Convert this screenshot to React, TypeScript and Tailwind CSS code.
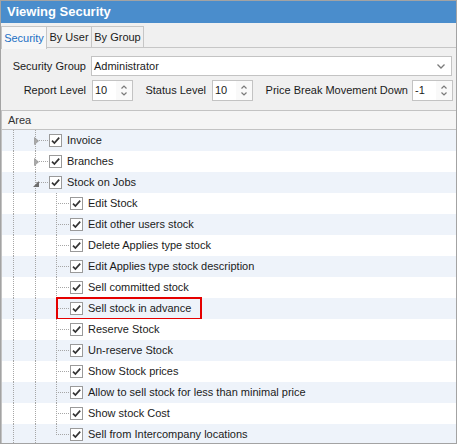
import React from 'react';

type Row = { label: string; level: 1 | 2; exp?: 'collapsed' | 'expanded'; last?: boolean; marked?: boolean };

const rows: Row[] = [
  { label: 'Invoice', level: 1, exp: 'collapsed' },
  { label: 'Branches', level: 1, exp: 'collapsed' },
  { label: 'Stock on Jobs', level: 1, exp: 'expanded' },
  { label: 'Edit Stock', level: 2 },
  { label: 'Edit other users stock', level: 2 },
  { label: 'Delete Applies type stock', level: 2 },
  { label: 'Edit Applies type stock description', level: 2 },
  { label: 'Sell committed stock', level: 2 },
  { label: 'Sell stock in advance', level: 2, marked: true },
  { label: 'Reserve Stock', level: 2 },
  { label: 'Un-reserve Stock', level: 2 },
  { label: 'Show Stock prices', level: 2 },
  { label: 'Allow to sell stock for less than minimal price', level: 2 },
  { label: 'Show stock Cost', level: 2 },
  { label: 'Sell from Intercompany locations', level: 2, last: true },
];

const Check = () => (
  <div className="flex h-[13px] w-[13px] shrink-0 items-center justify-center border border-[#9a9a9a] bg-white">
    <svg width="11" height="11" viewBox="0 0 11 11">
      <path d="M2 5.6 L4.4 8 L9.2 2.6" fill="none" stroke="#333" strokeWidth="1.7" />
    </svg>
  </div>
);

const Spin = ({ value }: { value: string }) => (
  <div className="flex h-[21px] w-[41px] shrink-0 items-center border border-[#c3c3c3] bg-white">
    <span className="flex-1 pl-[2px] text-[11px] text-[#1b1b1b]">{value}</span>
    <div className="flex h-full w-[16px] flex-col items-center justify-center gap-[3px] bg-[#f9f9f9]">
      <svg width="6" height="4" viewBox="0 0 6 4">
        <path d="M0.5 3.5 L3 1 L5.5 3.5" fill="none" stroke="#7a7a7a" strokeWidth="1.2" />
      </svg>
      <svg width="6" height="4" viewBox="0 0 6 4">
        <path d="M0.5 0.5 L3 3 L5.5 0.5" fill="none" stroke="#7a7a7a" strokeWidth="1.2" />
      </svg>
    </div>
  </div>
);

const dot = 'border-dotted border-[#a6a6a6]';

function TreeRow({ row, index }: { row: Row; index: number }) {
  const bg = index % 2 === 0 ? 'bg-[#eef3fa]' : 'bg-white';
  return (
    <div className={`relative flex h-[21px] shrink-0 items-stretch ${bg}`}>
      <div className="w-[11px] shrink-0" />
      <div className={`w-[22px] shrink-0 border-l ${dot}`} />
      {row.level === 1 ? (
        <div className={`relative w-[14px] shrink-0 border-l ${dot}`}>
          <div className={`absolute left-0 right-[1px] top-[10px] border-t ${dot}`} />
          {row.exp === 'collapsed' ? (
            <svg className="absolute left-[-2px] top-[7px]" width="5" height="8" viewBox="0 0 5 8">
              <path d="M0.5 0.5 L4.5 4 L0.5 7.5 Z" fill="#a8a8a8" stroke="#8c8c8c" strokeWidth="0.6" />
            </svg>
          ) : (
            <svg className="absolute left-[-3px] top-[9px]" width="6" height="6" viewBox="0 0 6 6">
              <path d="M6 0 L6 6 L0 6 Z" fill="#6e6e6e" />
            </svg>
          )}
        </div>
      ) : (
        <>
          <div className={`w-[21px] shrink-0 border-l ${dot}`} />
          <div className="relative w-[14px] shrink-0">
            <div className={`absolute left-0 top-0 border-l ${dot} ${row.last ? 'h-[11px]' : 'bottom-0'}`} />
            <div className={`absolute left-0 right-[1px] top-[10px] border-t ${dot}`} />
          </div>
        </>
      )}
      <div className="flex items-center">
        <Check />
      </div>
      <span className="ml-[5px] flex items-center whitespace-nowrap text-[11px] text-[#1b1b1b]">{row.label}</span>
      {row.marked && (
        <div className="pointer-events-none absolute left-[54px] top-[-1px] h-[23px] w-[146px] border-2 border-[#e50000]" />
      )}
    </div>
  );
}

export default function App() {
  return (
    <div className="flex h-[444px] w-[457px] flex-col overflow-hidden border border-[#a3a3a3] bg-[#f0f0f0] font-['Liberation_Sans',Arial,sans-serif]">
      {/* title */}
      <div className="flex h-[22px] shrink-0 items-center bg-[#4a8dcc] pl-[6px] text-[13px] font-bold text-white">
        Viewing Security
      </div>
      {/* tabs */}
      <div className="flex h-[25px] shrink-0 items-end">
        <div className="relative z-10 -mb-px flex h-[23px] w-[46px] items-center justify-center border border-b-0 border-[#c6c6c6] bg-[#f7f7f7] text-[11px] text-[#1c6fc4]">
          Security
        </div>
        <div className="flex h-[22px] w-[45px] items-center justify-center border-y border-r border-[#c6c6c6] text-[11px] text-[#1b1b1b]">
          By User
        </div>
        <div className="flex h-[22px] w-[52px] items-center justify-center border-y border-r border-[#c6c6c6] text-[11px] text-[#1b1b1b]">
          By Group
        </div>
        <div className="flex-1 self-stretch border-b border-[#c6c6c6]" />
      </div>
      {/* form */}
      <div className="flex shrink-0 flex-col pt-[8px]">
        <div className="flex h-[20px] items-center">
          <div className="w-[85px] shrink-0 text-right text-[11px] text-[#1b1b1b]">Security Group</div>
          <div className="ml-[5px] mr-[4px] flex h-[20px] flex-1 items-center border border-[#c3c3c3] bg-white pl-[2px]">
            <span className="flex-1 text-[11px] text-[#1b1b1b]">Administrator</span>
            <svg className="mr-[6px]" width="8" height="5" viewBox="0 0 8 5">
              <path d="M0.5 0.5 L4 4 L7.5 0.5" fill="none" stroke="#7a7a7a" strokeWidth="1.3" />
            </svg>
          </div>
        </div>
        <div className="mt-[4px] flex h-[21px] items-center">
          <div className="w-[85px] shrink-0 text-right text-[11px] text-[#1b1b1b]">Report Level</div>
          <div className="ml-[6px]">
            <Spin value="10" />
          </div>
          <div className="w-[73px] shrink-0 text-right text-[11px] text-[#1b1b1b]">Status Level</div>
          <div className="ml-[6px]">
            <Spin value="10" />
          </div>
          <div className="w-[155px] shrink-0 text-right text-[11px] text-[#1b1b1b]">Price Break Movement Down</div>
          <div className="ml-[4px]">
            <Spin value="-1" />
          </div>
        </div>
      </div>
      {/* grid */}
      <div className="mt-[9px] flex min-h-0 flex-1 flex-col border-l border-t border-[#c3c3c3] bg-white">
        <div className="flex h-[19px] shrink-0 items-center border-b border-[#c3c3c3] bg-[#f5f5f5] pl-[6px] text-[11px] text-[#333]">
          Area
        </div>
        {rows.map((r, i) => (
          <TreeRow key={r.label} row={r} index={i} />
        ))}
      </div>
    </div>
  );
}
